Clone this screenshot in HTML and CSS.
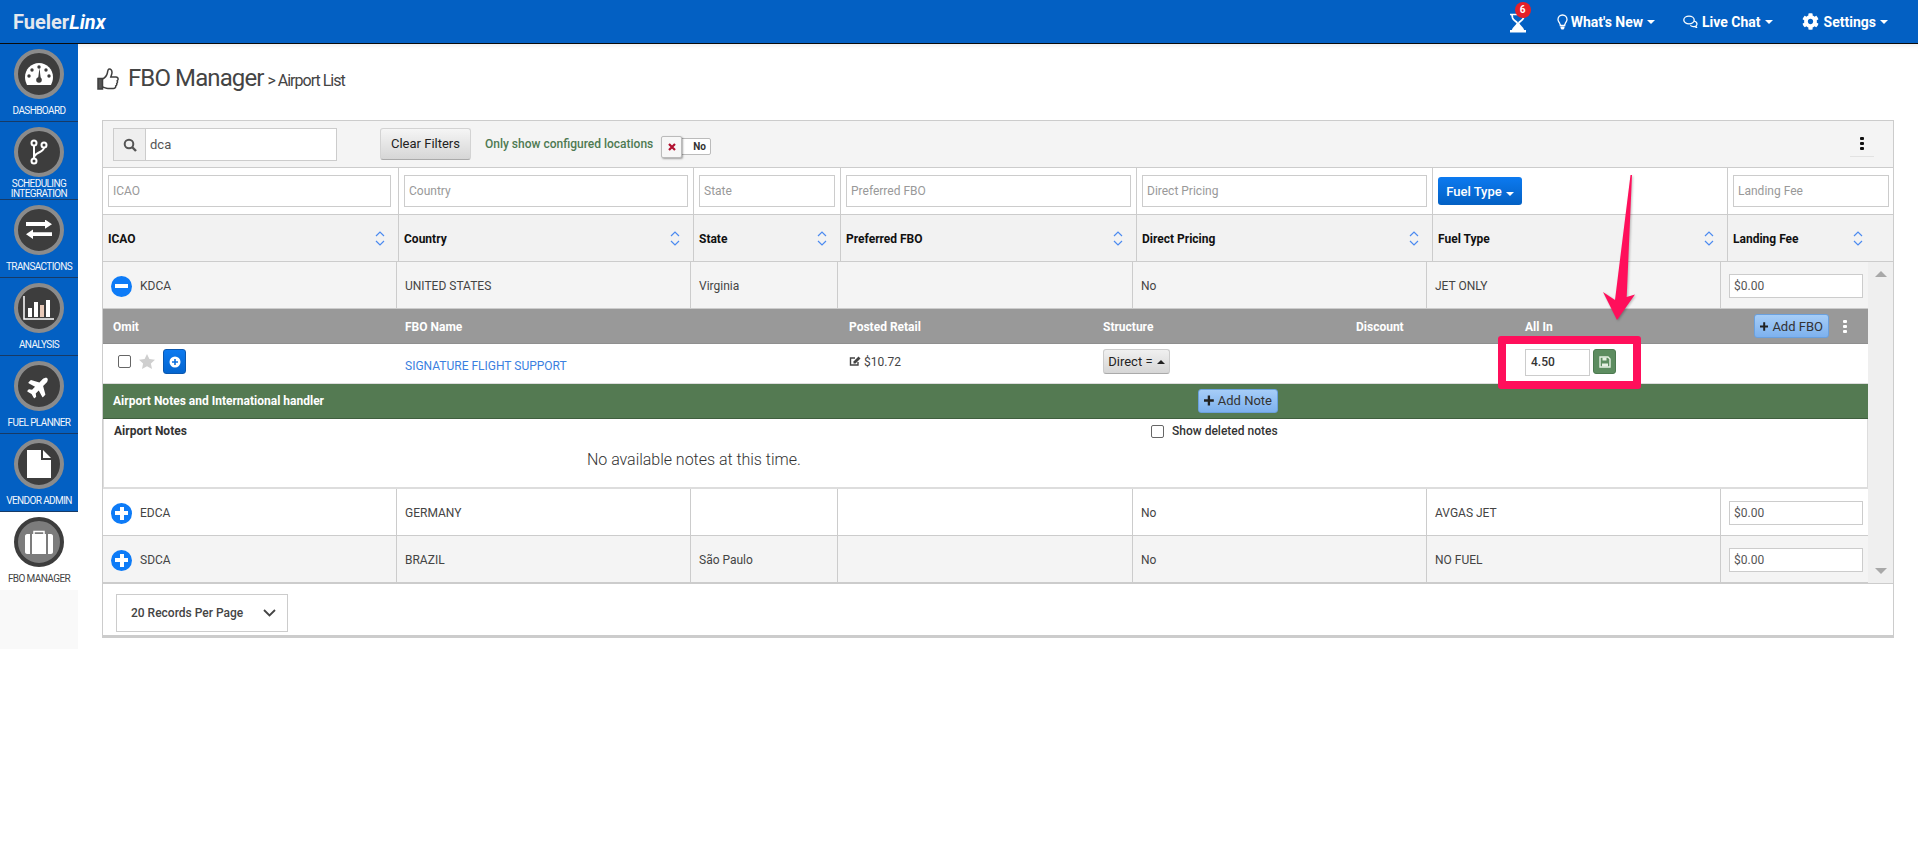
FILE: index.html
```html
<!DOCTYPE html>
<html lang="en">
<head>
<meta charset="utf-8">
<title>FBO Manager</title>
<link rel="stylesheet" href="styles.css">
</head>
<body>
<header class="topbar">
  <div class="logo">Fueler<em>Linx</em></div>
  <nav class="topnav">
    <div class="hourglass">
      <svg width="18" height="20" viewBox="0 0 18 20"><path d="M1 1.500h16M3 2l.6 3c.5 2 3.400 3.300 4.400 4.500V10.500M15 2l-.6 3c-.5 2-3.400 3.300-4.400 4.500v1" fill="none" stroke="#fff" stroke-width="1.700"/><path d="M8 10c-1 2-4.500 4-5.200 7H1v2.500h16V17h-1.800C14.500 14 11 12 10 10z" fill="#fff"/></svg>
      <span class="badge">6</span>
    </div>
    <div class="navitem item-new">
      <svg width="11" height="16" viewBox="0 0 11 16"><path d="M5.500 1C3 1 1 3 1 5.500c0 2 1.500 3 2 4.500.2.500.3 1 .3 1.500h4.400c0-.5.1-1 .3-1.500.5-1.500 2-2.500 2-4.500C10 3 8 1 5.500 1z" fill="none" stroke="#fff" stroke-width="1.300"/><path d="M3.500 12.500h4v1.500l-1 1.500h-2l-1-1.500z" fill="#fff"/></svg>
      <span>What's New</span><i class="caret"></i>
    </div>
    <div class="navitem item-chat">
      <svg width="15" height="13" viewBox="0 0 15 13"><ellipse cx="6" cy="5" rx="5.200" ry="3.800" fill="none" stroke="#fff" stroke-width="1.300"/><path d="M11 6c2 .5 3 1.500 3 3 0 1-.6 1.600-1 2l.6 1.500-2.300-1c-1.500.3-3-.2-4-1.200" fill="none" stroke="#fff" stroke-width="1.200"/></svg>
      <span>Live Chat</span><i class="caret"></i>
    </div>
    <div class="navitem item-set">
      <svg width="17" height="17" viewBox="0 0 512 512"><path fill="#fff" d="M487.400 315.700l-42.600-24.600c4.300-23.200 4.300-47 0-70.200l42.600-24.600c4.900-2.800 7.100-8.600 5.500-14-11.100-35.600-30-67.800-54.700-94.600-3.800-4.100-10-5.100-14.800-2.300L380.800 110c-17.900-15.400-38.500-27.300-60.800-35.100V25.800c0-5.600-3.900-10.500-9.400-11.700-36.700-8.200-74.300-7.800-109.200 0-5.500 1.200-9.400 6.100-9.400 11.700V75c-22.200 7.900-42.800 19.800-60.800 35.100L88.700 85.500c-4.900-2.800-11-1.900-14.800 2.300-24.700 26.700-43.600 58.900-54.700 94.600-1.700 5.400.6 11.200 5.500 14L67.300 221c-4.300 23.200-4.300 47 0 70.200l-42.600 24.600c-4.900 2.800-7.100 8.600-5.500 14 11.100 35.600 30 67.800 54.700 94.600 3.800 4.100 10 5.100 14.800 2.300l42.600-24.600c17.900 15.400 38.500 27.300 60.800 35.100v49.200c0 5.600 3.900 10.500 9.400 11.700 36.700 8.200 74.300 7.800 109.200 0 5.500-1.200 9.400-6.100 9.400-11.700v-49.200c22.200-7.900 42.800-19.800 60.800-35.100l42.600 24.600c4.900 2.800 11 1.900 14.800-2.300 24.700-26.700 43.600-58.900 54.700-94.600 1.500-5.500-.7-11.300-5.600-14.100zM256 336c-44.100 0-80-35.900-80-80s35.900-80 80-80 80 35.900 80 80-35.900 80-80 80z"/></svg>
      <span>Settings</span><i class="caret"></i>
    </div>
  </nav>
</header>

<div class="shell">
  <aside class="sidebar">
    <div class="side-item">
      <div class="disc"><svg width="30" height="24" viewBox="0 0 30 24"><path d="M15 1C7 1 1 7.500 1 15c0 3 .8 5.500 2 8h24c1.200-2.500 2-5 2-8 0-7.500-6-14-14-14z" fill="#fff"/><g fill="#3d3d3d"><circle cx="15" cy="5" r="1.700"/><circle cx="8" cy="8" r="1.700"/><circle cx="5" cy="14" r="1.700"/><circle cx="25" cy="14" r="1.700"/><circle cx="22" cy="8" r="1.700"/><circle cx="15" cy="18" r="2.800"/><path d="M14 17l1.500-11 1.300 11z"/></g></svg></div>
      <span class="side-label">DASHBOARD</span>
    </div>
    <div class="side-item">
      <div class="disc"><svg width="18" height="26" viewBox="0 0 18 26"><g fill="none" stroke="#fff" stroke-width="2"><circle cx="4" cy="4" r="2.500"/><circle cx="4" cy="22" r="2.500"/><circle cx="14" cy="6" r="2.500"/><path d="M4 6.500v13M14 8.500c0 5-10 5-10 10"/></g></svg></div>
      <span class="side-label side-label-two">SCHEDULING<br>INTEGRATION</span>
    </div>
    <div class="side-item">
      <div class="disc"><svg width="28" height="20" viewBox="0 0 28 20"><path d="M1 3h19V0l7 5.500-7 5.500V7.500H1z" fill="#fff" transform="translate(0 -.5) scale(1 .85)"/><path d="M27 12.500H8V9.500L1 15l7 5.500v-3.500h19z" fill="#fff" transform="translate(0 1.500) scale(1 .85)"/></svg></div>
      <span class="side-label">TRANSACTIONS</span>
    </div>
    <div class="side-item">
      <div class="disc"><svg width="32" height="24" viewBox="0 0 32 24"><path d="M1 0v23h30" fill="none" stroke="#fff" stroke-width="1.500"/><g fill="#fff"><rect x="5" y="12" width="4" height="9"/><rect x="11" y="6" width="4" height="15"/><rect x="17" y="9" width="4" height="12" fill="#e8c9b8"/><rect x="23" y="4" width="4" height="17"/></g></svg></div>
      <span class="side-label">ANALYSIS</span>
    </div>
    <div class="side-item">
      <div class="disc"><svg class="plane" width="24" height="21" viewBox="0 0 576 512"><path fill="#fff" d="M480 192H365.710L260.610 8.060A16.014 16.014 0 0 0 246.710 0h-65.500c-10.630 0-18.300 10.170-15.380 20.390L214.860 192H112l-43.200-57.600c-3.020-4.030-7.770-6.400-12.800-6.400H16.010C5.600 128-2.040 137.780.49 147.880L32 256 .49 364.120C-2.040 374.220 5.600 384 16.010 384H56c5.040 0 9.780-2.370 12.800-6.400L112 320h102.860l-49.030 171.600c-2.920 10.220 4.750 20.400 15.380 20.400h65.500c5.740 0 11.040-3.080 13.890-8.060L365.710 320H480c35.350 0 96-28.650 96-64s-60.650-64-96-64z"/></svg></div>
      <span class="side-label">FUEL PLANNER</span>
    </div>
    <div class="side-item">
      <div class="disc"><svg width="24" height="28" viewBox="0 0 24 28"><path d="M0 0h14v10h10v18H0z" fill="#fff"/><path d="M16 0l8 8h-8z" fill="#fff"/></svg></div>
      <span class="side-label">VENDOR ADMIN</span>
    </div>
    <div class="side-item side-active">
      <div class="disc"><svg width="28" height="24" viewBox="0 0 28 24"><path d="M9 4V1.500h10V4" fill="none" stroke="#fff" stroke-width="1.500"/><path d="M2 4h3v20H2c-1 0-2-1-2-2V6c0-1 1-2 2-2zM7 4h14v20H7zM23 4h3c1 0 2 1 2 2v16c0 1-1 2-2 2h-3z" fill="#fff"/></svg></div>
      <span class="side-label">FBO MANAGER</span>
    </div>
    <div class="side-fill"></div>
  </aside>

  <main class="content">
    <div class="page-title">
      <svg class="thumb" width="22" height="23" viewBox="0 0 22 23"><path d="M1 10.500h4.500V21H1z" fill="#555" stroke="#3f3f3f" stroke-width="1.500"/><path d="M5.500 11c2-1 4.500-4 5-6.500.2-1.500.2-3 1.500-3.500 2-.3 3 1.500 3 3.500 0 1.500-.7 3-1.200 4.500H19c1.500 0 2.300 1.300 2 2.500-.2.700-.5 1-.8 1.300.5 1 .3 2-.5 2.700.3 1-.1 2-1 2.500.2 1.500-.8 2.500-2.200 2.500H11c-2.200 0-3.500-1-5.500-1.500" fill="none" stroke="#3f3f3f" stroke-width="1.500"/></svg>
      <h1>FBO Manager</h1>
      <span class="crumb">&gt; Airport List</span>
    </div>

    <section class="panel">
      <div class="toolbar">
        <div class="search">
          <span class="search-addon"><svg width="14" height="14" viewBox="0 0 14 14"><circle cx="6" cy="6" r="4.300" fill="none" stroke="#555" stroke-width="2"/><path d="M9 9l4 4" stroke="#555" stroke-width="2.400"/></svg></span>
          <span class="search-val">dca</span>
        </div>
        <button class="btn-clear">Clear Filters</button>
        <span class="only-label">Only show configured locations</span>
        <div class="toggle">
          <span class="toggle-no">No</span>
          <span class="toggle-knob"><svg width="8" height="8" viewBox="0 0 8 8"><path d="M1 1l6 6M7 1L1 7" stroke="#b1102f" stroke-width="2.200"/></svg></span>
        </div>
        <span class="kebab"><i></i><i></i><i></i></span>
      </div>

      <div class="cols-head filter-row">
        <div class="cell"><span class="inp ph">ICAO</span></div>
        <div class="cell"><span class="inp ph">Country</span></div>
        <div class="cell"><span class="inp ph">State</span></div>
        <div class="cell"><span class="inp ph">Preferred FBO</span></div>
        <div class="cell"><span class="inp ph">Direct Pricing</span></div>
        <div class="cell"><button class="btn-fuel">Fuel Type<i class="caret"></i></button></div>
        <div class="cell cell-last"><span class="inp ph">Landing Fee</span></div>
      </div>

      <div class="cols-head sort-row">
        <div class="cell"><b>ICAO</b><svg class="sort" width="12" height="17" viewBox="0 0 12 17"><path d="M2 6l4-4 4 4M2 11l4 4 4-4" fill="none" stroke="#4c8bf0" stroke-width="1.200"/></svg></div>
        <div class="cell"><b>Country</b><svg class="sort" width="12" height="17" viewBox="0 0 12 17"><path d="M2 6l4-4 4 4M2 11l4 4 4-4" fill="none" stroke="#4c8bf0" stroke-width="1.200"/></svg></div>
        <div class="cell"><b>State</b><svg class="sort" width="12" height="17" viewBox="0 0 12 17"><path d="M2 6l4-4 4 4M2 11l4 4 4-4" fill="none" stroke="#4c8bf0" stroke-width="1.200"/></svg></div>
        <div class="cell"><b>Preferred FBO</b><svg class="sort" width="12" height="17" viewBox="0 0 12 17"><path d="M2 6l4-4 4 4M2 11l4 4 4-4" fill="none" stroke="#4c8bf0" stroke-width="1.200"/></svg></div>
        <div class="cell"><b>Direct Pricing</b><svg class="sort" width="12" height="17" viewBox="0 0 12 17"><path d="M2 6l4-4 4 4M2 11l4 4 4-4" fill="none" stroke="#4c8bf0" stroke-width="1.200"/></svg></div>
        <div class="cell"><b>Fuel Type</b><svg class="sort" width="12" height="17" viewBox="0 0 12 17"><path d="M2 6l4-4 4 4M2 11l4 4 4-4" fill="none" stroke="#4c8bf0" stroke-width="1.200"/></svg></div>
        <div class="cell cell-last"><b>Landing Fee</b><svg class="sort" width="12" height="17" viewBox="0 0 12 17"><path d="M2 6l4-4 4 4M2 11l4 4 4-4" fill="none" stroke="#4c8bf0" stroke-width="1.200"/></svg></div>
      </div>

      <div class="scroller">
        <div class="rows">
          <div class="row row-alt">
            <div class="td td-first"><span class="round"><i class="bar-h"></i></span>KDCA</div>
            <div class="td">UNITED STATES</div>
            <div class="td">Virginia</div>
            <div class="td"></div>
            <div class="td">No</div>
            <div class="td">JET ONLY</div>
            <div class="td td-last"><span class="fee">$0.00</span></div>
          </div>

          <div class="fbo-grid fbo-head">
            <span>Omit</span><span>FBO Name</span><span>Posted Retail</span><span>Structure</span><span>Discount</span><span>All In</span>
            <div class="fbo-actions">
              <button class="btn-light"><svg width="11" height="11" viewBox="0 0 11 11"><path d="M5.500 0v11M0 5.500h11" stroke="#222" stroke-width="2.600"/></svg>Add FBO</button>
              <span class="kebab kebab-white"><i></i><i></i><i></i></span>
            </div>
          </div>

          <div class="fbo-grid fbo-row">
            <div class="omit">
              <span class="check"></span>
              <svg width="16" height="15" viewBox="0 0 16 15"><path d="M8 0l2.400 5 5.600.7-4.100 3.800 1.100 5.500L8 12.300 3 15l1.100-5.500L0 5.700 5.600 5z" fill="#cfcfcf"/></svg>
              <button class="btn-plus"><svg width="12" height="12" viewBox="0 0 12 12"><circle cx="6" cy="6" r="5.500" fill="#fff"/><path d="M6 3v6M3 6h6" stroke="#0a6fe0" stroke-width="1.600"/></svg></button>
            </div>
            <a class="fbo-link">SIGNATURE FLIGHT SUPPORT</a>
            <div class="retail"><svg width="12" height="11" viewBox="0 0 12 11"><path d="M9 6v3H1.500V2H6" fill="none" stroke="#444" stroke-width="1.400"/><path d="M4.500 5.500L9.500.5l2 2-5 5H4.500z" fill="#444"/></svg>$10.72</div>
            <div><button class="btn-direct">Direct = <i class="caret caret-dark"></i></button></div>
            <div></div>
            <div class="allin">
              <span class="allin-input">4.50</span>
              <button class="btn-save"><svg width="12" height="12" viewBox="0 0 12 12"><path d="M1 1h8l2 2v8H1z" fill="none" stroke="#e6f1e3" stroke-width="1.400"/><path d="M3.500 1.500h4v3h-4z" fill="#e6f1e3"/><path d="M3 7.500h6v3H3z" fill="#e6f1e3"/></svg></button>
            </div>
            <div></div>
          </div>

          <div class="notes-head">
            <span class="notes-title">Airport Notes and International handler</span>
            <button class="btn-light"><svg width="11" height="11" viewBox="0 0 11 11"><path d="M5.500 0v11M0 5.500h11" stroke="#222" stroke-width="2.600"/></svg>Add Note</button>
          </div>
          <div class="notes">
            <div class="notes-top">
              <b>Airport Notes</b>
              <label class="deleted"><span class="check"></span>Show deleted notes</label>
            </div>
            <p class="empty">No available notes at this time.</p>
          </div>

          <div class="row">
            <div class="td td-first"><span class="round"><i class="bar-h"></i><i class="bar-v"></i></span>EDCA</div>
            <div class="td">GERMANY</div>
            <div class="td"></div>
            <div class="td"></div>
            <div class="td">No</div>
            <div class="td">AVGAS JET</div>
            <div class="td td-last"><span class="fee">$0.00</span></div>
          </div>
          <div class="row row-alt">
            <div class="td td-first"><span class="round"><i class="bar-h"></i><i class="bar-v"></i></span>SDCA</div>
            <div class="td">BRAZIL</div>
            <div class="td">São Paulo</div>
            <div class="td"></div>
            <div class="td">No</div>
            <div class="td">NO FUEL</div>
            <div class="td td-last"><span class="fee">$0.00</span></div>
          </div>
        </div>
        <div class="scrollbar"><i class="arrow-up"></i><i class="arrow-down"></i></div>
      </div>

      <div class="footer">
        <div class="per-page"><span>20 Records Per Page</span><svg width="13" height="8" viewBox="0 0 13 8"><path d="M1 1l5.500 5.500L12 1" fill="none" stroke="#444" stroke-width="1.800"/></svg></div>
      </div>
    </section>
  </main>
</div>

<div class="callout-box"></div>
<svg class="callout-arrow" width="40" height="155" viewBox="0 0 40 155"><path d="M30.500 5H32L26.700 127l8.300-2.500L17 150 3 122l12 8z" fill="#ff0f5b"/></svg>
</body>
</html>
```

FILE: styles.css
```css
* { box-sizing: border-box; }
html, body { margin: 0; padding: 0; }
body { font-family: Roboto, "Liberation Sans", sans-serif; font-size: 12px; color: #3f3f3f; background: #fff; height: 844px; overflow: hidden; position: relative; }
button { font-family: inherit; cursor: default; }

.topbar { height: 44px; background: #0360c3; border-bottom: 1px solid #0b0b0b; display: flex; align-items: center; justify-content: space-between; color: #fff; }
.logo { padding-left: 13px; font-size: 20px; font-weight: 700; color: #e4e8ee; }
.logo em { color: #fff; font-style: italic; }
.topnav { display: flex; align-items: center; height: 100%; padding-right: 30px; }
.hourglass { position: relative; width: 18px; height: 20px; margin-right: 30px; margin-top: 2px; }
.badge { position: absolute; left: 6px; top: -11px; width: 16px; height: 16px; border-radius: 50%; background: #e3202a; color: #fff; font-size: 10px; font-weight: 700; line-height: 16px; text-align: center; }
.navitem { display: flex; align-items: center; font-size: 14px; font-weight: 700; color: #fff; }
.item-new svg { margin-right: 3px; }
.item-chat { margin-left: 28px; }
.item-chat svg { margin-right: 4px; }
.item-set { margin-left: 29px; }
.item-set svg { margin-right: 5px; }
.caret { display: inline-block; width: 0; height: 0; margin-left: 4px; border-left: 4px solid transparent; border-right: 4px solid transparent; border-top: 4px solid currentColor; }
.caret-dark { border-top: 0; border-bottom: 4px solid #222; margin-left: 1px; vertical-align: 2px; }

.shell { display: flex; align-items: flex-start; }
.sidebar { width: 78px; flex: none; background: #0360c3; }
.side-item { height: 78px; border-bottom: 1px solid #173a66; display: flex; flex-direction: column; align-items: center; padding-top: 5px; color: #fff; }
.disc { width: 50px; height: 50px; flex: none; border-radius: 50%; background: #3d3d3d; border: 4px solid #8b8b8b; display: flex; align-items: center; justify-content: center; }
.plane { transform: rotate(-45deg); }
.side-label { margin-top: 7px; font-size: 10px; font-weight: 400; line-height: 10px; text-align: center; white-space: nowrap; color: #f2f6fb; letter-spacing: -.6px; }
.side-label-two { margin-top: 2px; }
.side-active { background: #fff; color: #333; border-bottom: 0; }
.side-active .disc { background: #7c7c7c; border-color: #3d3d3d; }
.side-active .side-label { color: #444; }
.side-fill { height: 59px; background: #f9f9f9; }

.content { flex: 1; padding-left: 24px; box-shadow: inset 0 6px 6px -6px rgba(0,0,0,.12); height: 604px; }
.page-title { display: flex; align-items: center; height: 76px; padding-bottom: 8px; margin-left: -5px; }
.thumb { margin-right: 9px; margin-top: 2px; flex: none; }
.page-title h1 { margin: 0; font-size: 24px; font-weight: 400; color: #444; letter-spacing: -.9px; }
.crumb { font-size: 16px; color: #444; margin-left: 4px; margin-top: 4px; letter-spacing: -1px; }

.panel { width: 1792px; border: 1px solid #ccc; border-bottom: 3px solid #ccc; background: #fff; }
.toolbar { height: 47px; background: #f4f4f4; border-bottom: 1px solid #ccc; display: flex; align-items: flex-start; padding: 7px 0 0 10px; position: relative; }
.search { display: flex; width: 224px; height: 33px; border: 1px solid #ccc; background: #fff; }
.search-addon { width: 32px; background: #efefef; border-right: 1px solid #ccc; display: flex; align-items: center; justify-content: center; }
.search-val { padding: 0 4px; line-height: 31px; font-size: 13px; color: #555; }
.btn-clear { margin-left: 43px; width: 91px; height: 32px; padding: 0 0 2px; border: 1px solid #d3d3d3; border-bottom-color: #aaa; border-radius: 3px; background: linear-gradient(#f5f5f5, #d6d6d6); font-size: 13px; font-weight: 400; color: #222; }
.only-label { margin-left: 14px; margin-top: 9px; font-size: 12px; font-weight: 500; color: #4e7a52; white-space: nowrap; }
.toggle { position: relative; margin-left: 8px; margin-top: 10px; width: 50px; height: 17px; border: 1px solid #bbb; background: #fff; border-radius: 2px; }
.toggle-no { position: absolute; left: 31px; top: 2px; font-size: 10px; font-weight: 700; color: #333; }
.toggle-knob { position: absolute; left: -1px; top: -3px; width: 21px; height: 22px; background: #f7f7f7; border: 1px solid #bbb; border-radius: 2px; box-shadow: 1px 1px 2px rgba(0,0,0,.35); display: flex; align-items: center; justify-content: center; }
.kebab { display: inline-flex; flex-direction: column; gap: 2px; align-items: center; }
.kebab i { width: 4px; height: 3px; border-radius: 1px; background: #111; }
.toolbar .kebab { margin-left: auto; margin-right: 19px; width: 24px; height: 29px; padding-top: 9px; border-bottom: 1px solid #e2e2e2; }

.cols-head { display: grid; grid-template-columns: 296px 295px 147px 296px 296px 295px 1fr; border-bottom: 1px solid #ccc; }
.cell { border-right: 1px solid #ccc; display: flex; align-items: center; padding: 0 5px; }
.cell-last { border-right: 0; }
.filter-row { height: 47px; background: #fff; }
.inp { display: block; width: 100%; height: 32px; border: 1px solid #ccc; background: #fff; padding: 0 4px; line-height: 30px; font-size: 12px; color: #999; }
.filter-row .cell:first-child { padding-right: 7px; }
.filter-row .cell:nth-child(7) { padding-right: 4px; }
.btn-fuel { width: 84px; height: 28px; padding: 0; border: 0; border-radius: 3px; background: linear-gradient(#0c7af0, #0360c3); color: #fff; font-size: 13px; font-weight: 500; }
.sort-row { height: 47px; background: #f2f2f2; }
.sort-row .cell { justify-content: space-between; padding-right: 12px; }
.sort-row .cell-last { padding-right: 29px; }
.sort-row b { font-size: 12px; font-weight: 700; color: #111; margin-top: 2px; }

.scroller { display: flex; border-bottom: 1px solid #ccc; }
.rows { width: 1765px; flex: none; }
.scrollbar { flex: 1; background: #efefef; position: relative; }
.arrow-up, .arrow-down { position: absolute; left: 7px; width: 0; height: 0; border-left: 6px solid transparent; border-right: 6px solid transparent; }
.arrow-up { top: 9px; border-bottom: 6px solid #a8a8a8; }
.arrow-down { bottom: 9px; border-top: 6px solid #a8a8a8; }

.row { display: grid; grid-template-columns: 294px 294px 147px 295px 294px 294px 1fr; height: 47px; background: #fff; border-bottom: 1px solid #ccc; }
.row-alt { background: #f4f4f4; }
.td { border-right: 1px solid #ccc; display: flex; align-items: center; padding: 2px 0 0 8px; font-size: 12px; color: #444; }
.td-first { gap: 8px; }
.td-last { border-right: 0; }
.round { position: relative; width: 21px; height: 21px; flex: none; border-radius: 50%; background: #0d7bf7; }
.bar-h, .bar-v { position: absolute; background: #fff; }
.bar-h { left: 4px; top: 8.500px; width: 13px; height: 4px; }
.bar-v { left: 8.500px; top: 4px; width: 4px; height: 13px; }
.fee { display: block; width: 134px; height: 24px; border: 1px solid #ccc; background: #fff; padding-left: 4px; line-height: 22px; font-size: 12px; color: #555; }

.fbo-grid { display: grid; grid-template-columns: 292px 444px 254px 253px 169px 229px 1fr; padding-left: 10px; }
.fbo-head { height: 35px; background: #999; align-items: center; color: #fff; font-weight: 700; font-size: 12px; border-bottom: 1px solid #8f8f8f; }
.fbo-head > span { padding-top: 2px; }
.fbo-actions { display: flex; align-items: center; height: 100%; }
.btn-light { display: inline-flex; align-items: center; gap: 4px; height: 24px; padding: 0 5px; border: 1px solid #6aa0dd; border-radius: 3px; background: linear-gradient(#a6cdf7, #7db1ee); color: #333; font-size: 13px; white-space: nowrap; }
.fbo-head .btn-light { width: 75px; }
.kebab-white { margin-left: 14px; }
.kebab-white i { background: #fff; }
.fbo-row { height: 40px; align-items: start; padding-top: 5px; background: #fff; border-bottom: 1px solid #ddd; }
.omit { display: flex; align-items: center; gap: 8px; height: 25px; padding-left: 5px; }
.check { display: inline-block; width: 13px; height: 13px; flex: none; border: 1px solid #666; border-radius: 2px; background: #fff; }
.btn-plus { width: 23px; height: 25px; padding: 0; border: 1px solid #0a58b0; border-radius: 3px; background: linear-gradient(#0c7af0, #0465cf); display: flex; align-items: center; justify-content: center; }
.fbo-link { color: #3b7fe0; font-size: 12px; margin-top: 10px; }
.retail { display: flex; align-items: center; gap: 3px; height: 25px; font-size: 12px; color: #444; }
.btn-direct { display: block; width: 67px; height: 25px; padding: 0; border: 1px solid #ccc; border-bottom-color: #aaa; border-radius: 3px; background: linear-gradient(#f0f0f0, #d6d6d6); color: #222; font-size: 13px; }
.allin { display: flex; gap: 3px; align-items: flex-start; }
.allin-input { width: 65px; height: 27px; border: 1px solid #ccc; background: #fff; padding-left: 5px; line-height: 25px; font-size: 12px; font-weight: 500; color: #333; }
.btn-save { width: 23px; height: 25px; padding: 0; border: 1px solid #4c7a50; border-radius: 3px; background: #5d8d60; display: flex; align-items: center; justify-content: center; }

.notes-head { height: 35px; background: #547a52; border-bottom: 1px solid #3f5e3e; display: grid; grid-template-columns: 1085px 1fr; align-items: center; padding-left: 10px; color: #fff; }
.notes-title { font-weight: 700; font-size: 12px; }
.notes-head .btn-light { width: 80px; margin-top: -1px; }
.notes { height: 70px; border: 1px solid #ddd; border-top: 0; border-bottom: 2px solid #ddd; background: #fff; }
.notes-top { display: grid; grid-template-columns: 1037px 1fr; padding: 5px 0 0 10px; color: #333; align-items: center; }
.notes-top b { font-weight: 700; font-size: 12px; }
.deleted { display: flex; align-items: center; gap: 8px; font-size: 12px; font-weight: 500; }
.empty { margin: 12px 0 0; padding-left: 483px; font-size: 16px; font-weight: 300; color: #333; letter-spacing: -.03px; }

.footer { height: 51px; padding: 10px 0 0 13px; background: #fff; }
.per-page { width: 172px; height: 38px; border: 1px solid #ccc; display: flex; align-items: center; justify-content: space-between; padding: 0 11px 0 14px; font-size: 12px; font-weight: 500; color: #444; }

.callout-box { position: absolute; left: 1498px; top: 336px; width: 143px; height: 53px; border: 8px solid #ff0f5b; border-radius: 3px; }
.callout-arrow { position: absolute; left: 1600px; top: 170px; filter: drop-shadow(1px 1px 1px rgba(0,0,0,.25)); }
```
